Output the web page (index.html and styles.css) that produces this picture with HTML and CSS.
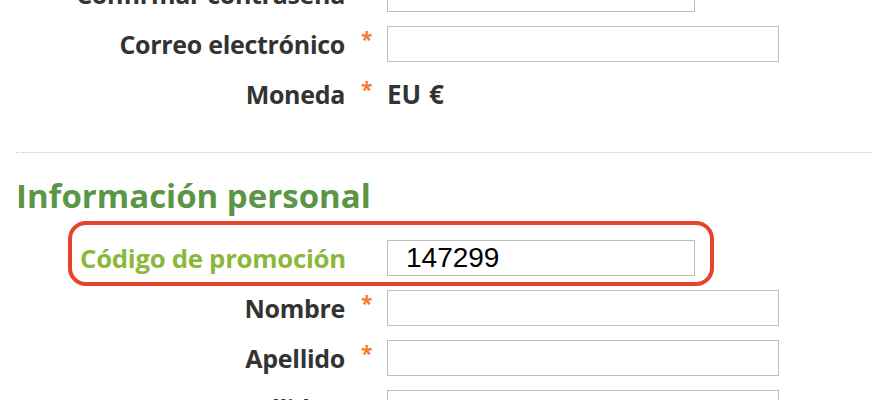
FILE: index.html
```html
<!DOCTYPE html>
<html lang="es">
<head>
<meta charset="utf-8">
<title>Registro</title>
<link rel="stylesheet" href="styles.css">
</head>
<body>
<div class="page">
  <div class="form account">
    <div class="row">
      <label class="lbl">Confirmar contraseña</label>
      <span class="req">*</span>
      <input class="field short" type="password">
    </div>
    <div class="row">
      <label class="lbl">Correo electrónico</label>
      <span class="req">*</span>
      <input class="field" type="text">
    </div>
    <div class="row">
      <label class="lbl">Moneda</label>
      <span class="req">*</span>
      <span class="value">EU €</span>
    </div>
  </div>

  <div class="divider"></div>

  <h2 class="section-title">Información personal</h2>

  <div class="form personal">
    <div class="row promo">
      <label class="lbl">Código de promoción</label>
      <span class="req"></span>
      <input class="field short code" type="text" value="147299">
    </div>
    <div class="row">
      <label class="lbl">Nombre</label>
      <span class="req">*</span>
      <input class="field" type="text">
    </div>
    <div class="row">
      <label class="lbl">Apellido</label>
      <span class="req">*</span>
      <input class="field" type="text">
    </div>
    <div class="row">
      <label class="lbl">Apellido 2</label>
      <span class="req"></span>
      <input class="field" type="text">
    </div>
  </div>
</div>
</body>
</html>
```
FILE: styles.css
```css
html, body {
  margin: 0;
  padding: 0;
  background: #fff;
}

body {
  font-family: "Open Sans", "DejaVu Sans", sans-serif;
  color: #333;
  overflow: hidden;
  height: 400px;
}

.page {
  margin-top: -24px;
}

.form {
  display: flex;
  flex-direction: column;
  gap: 14px;
}

.row {
  display: grid;
  grid-template-columns: 345px 42px auto;
  align-items: center;
  height: 36px;
  position: relative;
}

.lbl {
  text-align: right;
  font-weight: 700;
  font-size: 25px;
  letter-spacing: -0.3px;
  line-height: 36px;
  color: #333;
  white-space: nowrap;
}

.req {
  align-self: start;
  padding-left: 16px;
  font-size: 21px;
  font-weight: 700;
  line-height: 26px;
  color: #f27b2e;
}

.field {
  box-sizing: border-box;
  width: 392px;
  height: 36px;
  margin: 0;
  border: 1px solid #bdbdbd;
  background: #fff;
  outline: none;
  padding: 0 18px;
}

.field.short {
  width: 308px;
}

.field.code {
  font-family: "Liberation Sans", Arial, sans-serif;
  font-size: 28px;
  color: #000;
}

.value {
  font-weight: 700;
  font-size: 26px;
  word-spacing: 1px;
  color: #333;
  line-height: 36px;
}

.divider {
  margin: 40px 0 0 16px;
  border-top: 1px dotted #c8c8c8;
  height: 0;
}

.section-title {
  margin: 20px 0 21px 16px;
  font-size: 33px;
  font-weight: 700;
  line-height: 46px;
  color: #5a9646;
}

.promo .lbl {
  text-align: left;
  padding-left: 80px;
  font-size: 25.8px;
  color: #8ab83a;
}

.promo::before {
  content: "";
  position: absolute;
  left: 68px;
  top: -19px;
  width: 646px;
  height: 65px;
  box-sizing: border-box;
  border: 4px solid #e8432a;
  border-radius: 18px;
  pointer-events: none;
}
```
